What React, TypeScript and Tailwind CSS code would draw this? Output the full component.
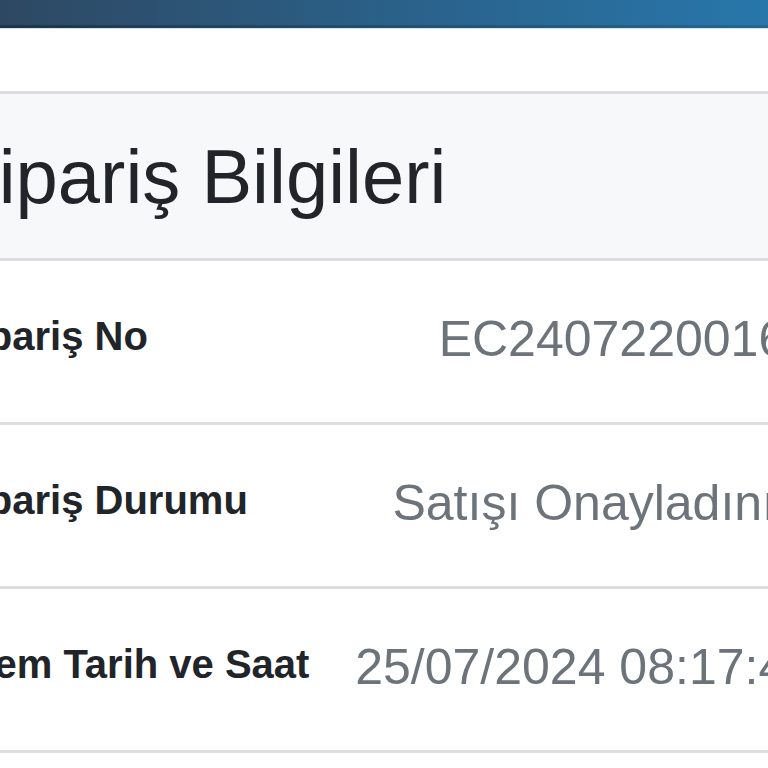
import React from "react";

const rows = [
  { label: "Sipariş No", value: "EC24072200162", pr: "pr-[14px]" },
  { label: "Sipariş Durumu", value: "Satışı Onayladınız", pr: "pr-[27px]" },
  { label: "İşlem Tarih ve Saat", value: "25/07/2024 08:17:45", pr: "pr-[14px]" },
];

export default function App() {
  return (
    <div
      className="w-full min-h-screen bg-white overflow-hidden"
      style={{ fontFamily: '"Liberation Sans", Arial, sans-serif' }}
    >
      <div className="h-[25px] bg-gradient-to-r from-[#2d4862] via-[#2a6088] to-[#2777ab]" />
      <div className="h-[3px] bg-gradient-to-r from-[#1f3347] via-[#234f70] to-[#236791]" />
      <div className="h-[1px] bg-[#cfe5ef]" />

      <div className="mt-[62px] ml-[-72px] w-[900px] border-t-[3px] border-[#dcdde0]">
        <div className="bg-[#f7f8fa] h-[167px] border-b-[3px] border-[#dcdde0] px-[20px] pt-[39px]">
          <div className="text-[76px] leading-[88px] text-[#212529] whitespace-nowrap">
            Sipariş Bilgileri
          </div>
        </div>
        {rows.map((r) => (
          <div
            key={r.label}
            className="flex items-start h-[164px] border-b-[3px] border-[#dcdde0] pl-[22px]"
          >
            <div className="flex-1 pt-[51px] text-[40px] leading-[48px] font-bold text-[#212529] whitespace-nowrap">
              {r.label}
            </div>
            <div
              className={`pt-[48px] text-[50px] leading-[60px] text-[#6c737a] whitespace-nowrap text-right ${r.pr}`}
            >
              {r.value}
            </div>
          </div>
        ))}
      </div>
    </div>
  );
}
